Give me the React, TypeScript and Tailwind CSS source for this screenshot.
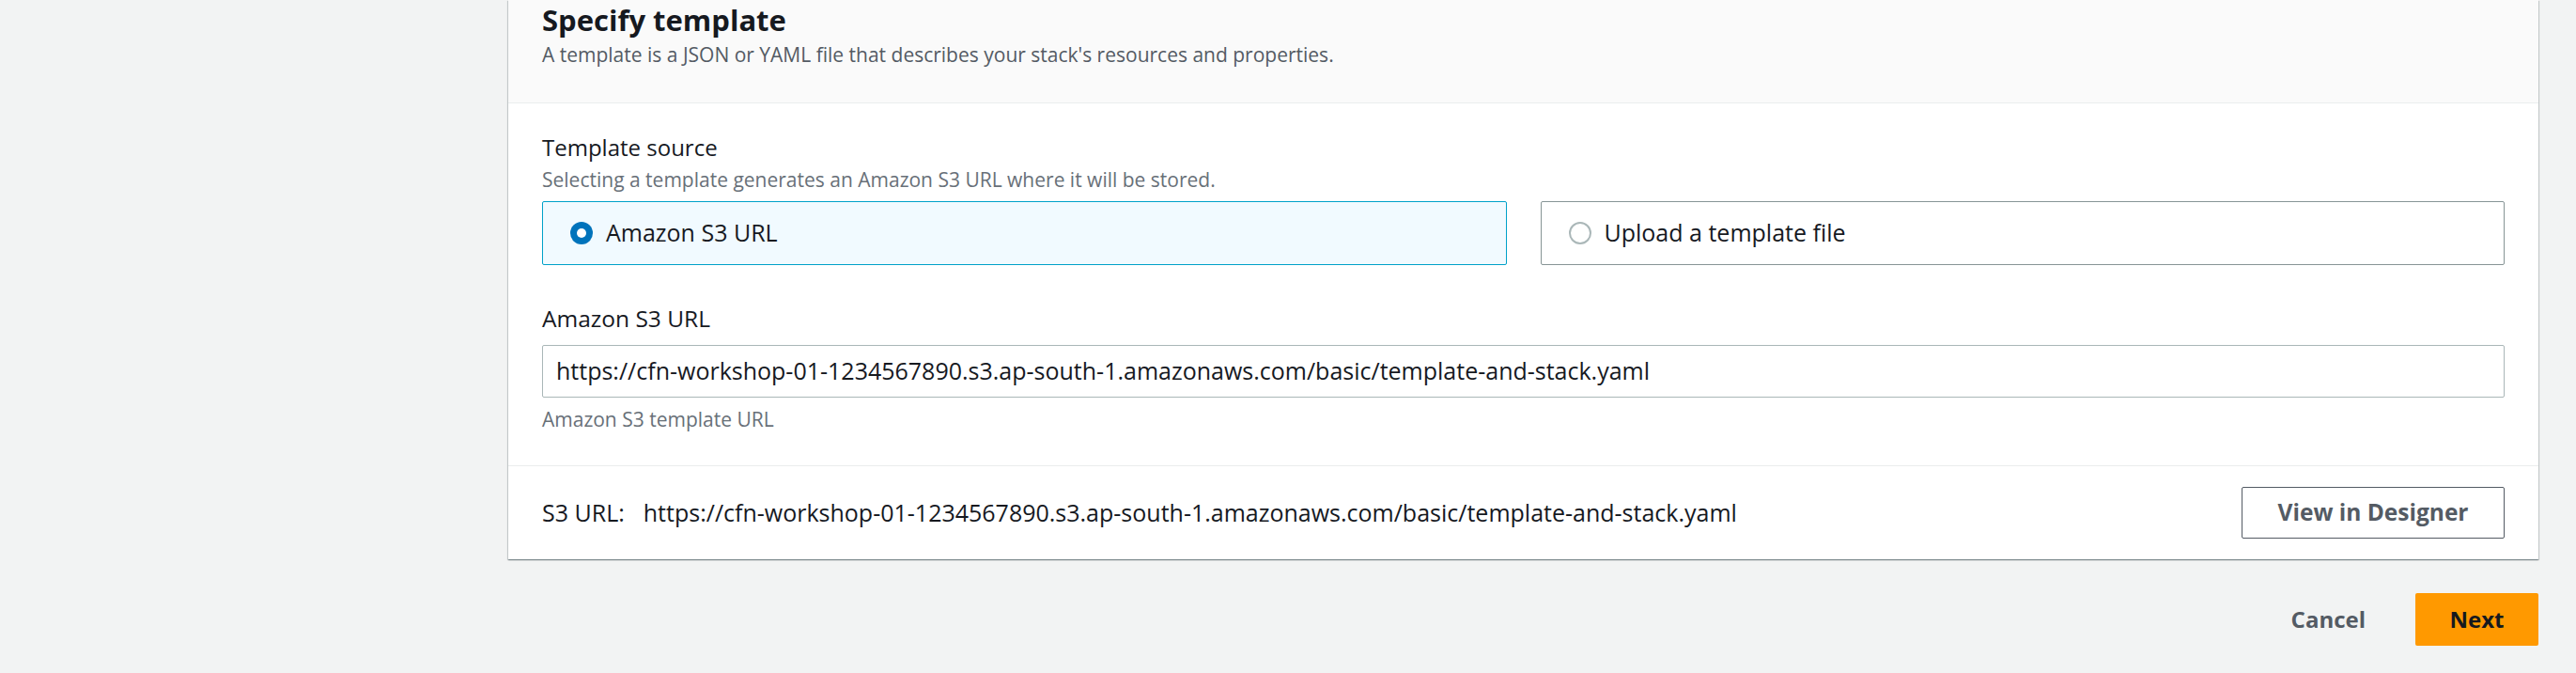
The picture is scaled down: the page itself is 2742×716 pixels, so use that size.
const URL = "https://cfn-workshop-01-1234567890.s3.ap-south-1.amazonaws.com/basic/template-and-stack.yaml";

function Radio({ checked }: { checked: boolean }) {
  if (checked) {
    return (
      <span className="flex h-[24px] w-[24px] shrink-0 items-center justify-center rounded-full bg-[#0073bb]">
        <span className="h-[10px] w-[10px] rounded-full bg-white"></span>
      </span>
    );
  }
  return <span className="h-[24px] w-[24px] shrink-0 rounded-full border-2 border-[#aab7b8] bg-white"></span>;
}

export default function App() {
  return (
    <div
      className="h-[716px] w-full overflow-hidden bg-[#f2f3f3] pl-[541px] pr-[40px] text-[#16191f]"
      style={{ fontFamily: '"Open Sans", "Noto Sans", sans-serif' }}
    >
      {/* Card */}
      <div className="bg-white shadow-[0_1px_1px_0_rgba(0,28,36,0.3),1px_1px_1px_0_rgba(0,28,36,0.15),-1px_1px_1px_0_rgba(0,28,36,0.15)]">
        {/* Header */}
        <div className="flex h-[110px] flex-col border-b border-[#eaeded] bg-[#fafafa] px-[36px] pt-[2px]">
          <h2 className="text-[31px] font-bold leading-[38px]">Specify template</h2>
          <p className="text-[21px] leading-[36px] text-[#545b64]">
            A template is a JSON or YAML file that describes your stack's resources and properties.
          </p>
        </div>

        {/* Body */}
        <div className="border-b border-[#eaeded] px-[36px] pt-[29px] pb-[33px]">
          <div className="text-[24px] leading-[36px]">Template source</div>
          <div className="text-[21px] leading-[32px] text-[#687078]">
            Selecting a template generates an Amazon S3 URL where it will be stored.
          </div>
          <div className="mt-[7px] grid grid-cols-2 gap-[36px]">
            <div className="flex h-[68px] items-center gap-[14px] rounded-[2px] border border-[#00a1c9] bg-[#f1faff] px-[29px]">
              <Radio checked />
              <span className="text-[25px]">Amazon S3 URL</span>
            </div>
            <div className="flex h-[68px] items-center gap-[14px] rounded-[2px] border border-[#879596] bg-white px-[29px]">
              <Radio checked={false} />
              <span className="text-[25px]">Upload a template file</span>
            </div>
          </div>

          <div className="mt-[39px] text-[24.5px] leading-[36px]">Amazon S3 URL</div>
          <div className="mt-[10px] flex h-[56px] items-center rounded-[2px] border border-[#aab7b8] bg-white px-[14px] text-[25px]">
            {URL}
          </div>
          <div className="mt-[7px] text-[21px] leading-[32px] text-[#687078]">Amazon S3 template URL</div>
        </div>

        {/* Footer */}
        <div className="flex h-[99px] items-center justify-between px-[36px]">
          <div className="flex items-center gap-[20px] text-[25px]">
            <span>S3 URL:</span>
            <span>{URL}</span>
          </div>
          <button className="flex h-[55px] w-[280px] items-center justify-center rounded-[2px] border border-[#545b64] bg-white text-[24.5px] font-bold text-[#545b64]">
            View in Designer
          </button>
        </div>
      </div>

      {/* Actions */}
      <div className="mt-[36px] flex items-center justify-end gap-[33px]">
        <button className="px-[20px] text-[24px] font-bold text-[#545b64]">Cancel</button>
        <button className="flex h-[56px] w-[131px] items-center justify-center rounded-[2px] bg-[#ff9900] text-[24px] font-bold text-[#16191f]">
          Next
        </button>
      </div>
    </div>
  );
}
